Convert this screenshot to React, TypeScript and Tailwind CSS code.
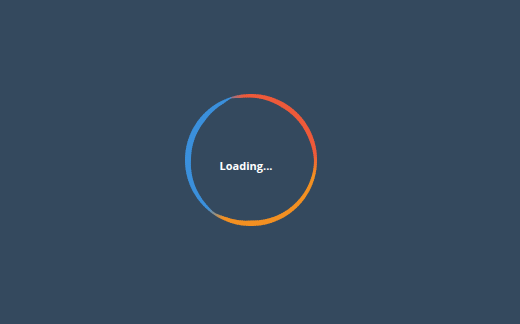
import React from "react";

type Key = [number, number];

const widthKeys: Key[] = [
  [-108, 1.2],
  [-100, 3],
  [-60, 5],
  [-20, 4.5],
  [0, 3],
  [10, 3],
  [60, 4.5],
  [90, 5.5],
  [115, 3.5],
  [125, 1.8],
  [135, 3],
  [180, 6],
  [220, 5.5],
  [245, 3],
  [252, 1.2],
];

const BLUE = [59, 144, 220];
const RED = [238, 90, 58];
const ORANGE = [243, 144, 34];

function lerp(a: number, b: number, t: number) {
  return a + (b - a) * t;
}

function widthAt(a: number) {
  for (let i = 0; i < widthKeys.length - 1; i++) {
    const [a0, w0] = widthKeys[i];
    const [a1, w1] = widthKeys[i + 1];
    if (a >= a0 && a <= a1) return lerp(w0, w1, (a - a0) / (a1 - a0));
  }
  return 1.2;
}

function mix(c1: number[], c2: number[], t: number) {
  const tt = Math.max(0, Math.min(1, t));
  return `rgb(${Math.round(lerp(c1[0], c2[0], tt))},${Math.round(lerp(c1[1], c2[1], tt))},${Math.round(lerp(c1[2], c2[2], tt))})`;
}

function colorAt(a: number) {
  if (a < -85) return mix(BLUE, RED, (a + 118) / 22);
  if (a < 50) return mix(RED, ORANGE, (a + 4) / 18);
  return mix(ORANGE, BLUE, (a - 116) / 16);
}

function Ring() {
  const cx = 70;
  const cy = 70;
  const R = 66;
  const segs: React.ReactNode[] = [];
  const step = 2;
  for (let a = -108; a < 252; a += step) {
    const a0 = a - 0.4;
    const a1 = a + step + 0.4;
    const w0 = widthAt(Math.max(-108, a0));
    const w1 = widthAt(Math.min(252, a1));
    const r0 = (a0 * Math.PI) / 180;
    const r1 = (a1 * Math.PI) / 180;
    const pts = [
      [cx + R * Math.cos(r0), cy + R * Math.sin(r0)],
      [cx + R * Math.cos(r1), cy + R * Math.sin(r1)],
      [cx + (R - w1) * Math.cos(r1), cy + (R - w1) * Math.sin(r1)],
      [cx + (R - w0) * Math.cos(r0), cy + (R - w0) * Math.sin(r0)],
    ]
      .map((p) => `${p[0].toFixed(2)},${p[1].toFixed(2)}`)
      .join(" ");
    segs.push(<polygon key={a} points={pts} fill={colorAt(a + step / 2)} />);
  }
  return (
    <svg width="140" height="140" viewBox="0 0 140 140" className="block">
      {segs}
    </svg>
  );
}

export default function App() {
  return (
    <div className="w-full h-[324px] bg-[#34495e] flex items-center justify-center">
      <div className="relative w-[140px] h-[140px] mr-[18px] mb-[4px]">
        <Ring />
        <div className="absolute inset-0 flex items-center justify-center pr-[10px] pt-[11px]">
          <span className="text-white text-[11px] font-bold leading-none font-['Open_Sans',sans-serif]">
            Loading...
          </span>
        </div>
      </div>
    </div>
  );
}
